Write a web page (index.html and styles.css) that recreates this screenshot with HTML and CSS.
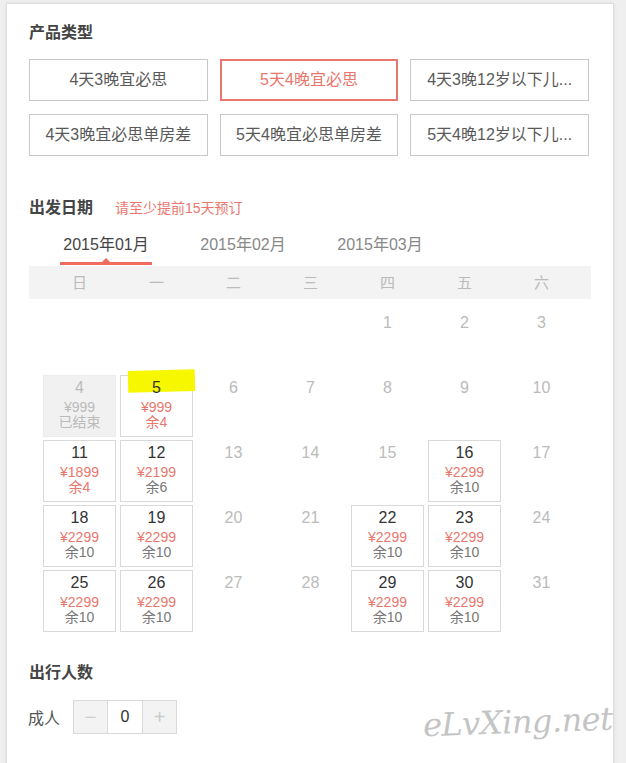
FILE: index.html
```html
<!DOCTYPE html>
<html lang="zh-CN">
<head>
<meta charset="utf-8">
<title>产品预订</title>
<link rel="stylesheet" href="styles.css">
</head>
<body>
<div class="card">
  <div class="sec-title">产品类型</div>
  <div class="products">
    <div class="prod">4天3晚宜必思</div>
    <div class="prod selected">5天4晚宜必思</div>
    <div class="prod">4天3晚12岁以下儿...</div>
    <div class="prod">4天3晚宜必思单房差</div>
    <div class="prod">5天4晚宜必思单房差</div>
    <div class="prod">5天4晚12岁以下儿...</div>
  </div>

  <div class="date-head">
    <span class="sec-title">出发日期</span>
    <span class="note">请至少提前15天预订</span>
  </div>
  <div class="tabs">
    <div class="tab active">2015年01月</div>
    <div class="tab">2015年02月</div>
    <div class="tab">2015年03月</div>
  </div>
  <div class="week">
    <span>日</span><span>一</span><span>二</span><span>三</span><span>四</span><span>五</span><span>六</span>
  </div>
  <div class="days">
    <div class="day"></div><div class="day"></div><div class="day"></div><div class="day"></div>
    <div class="day"><div class="num">1</div></div>
    <div class="day"><div class="num">2</div></div>
    <div class="day"><div class="num">3</div></div>

    <div class="day past"><div class="num">4</div><div class="price">¥999</div><div class="rem">已结束</div></div>
    <div class="day on"><span class="mark"></span><div class="num">5</div><div class="price">¥999</div><div class="rem low">余4</div></div>
    <div class="day"><div class="num">6</div></div>
    <div class="day"><div class="num">7</div></div>
    <div class="day"><div class="num">8</div></div>
    <div class="day"><div class="num">9</div></div>
    <div class="day"><div class="num">10</div></div>

    <div class="day on"><div class="num">11</div><div class="price">¥1899</div><div class="rem low">余4</div></div>
    <div class="day on"><div class="num">12</div><div class="price">¥2199</div><div class="rem">余6</div></div>
    <div class="day"><div class="num">13</div></div>
    <div class="day"><div class="num">14</div></div>
    <div class="day"><div class="num">15</div></div>
    <div class="day on"><div class="num">16</div><div class="price">¥2299</div><div class="rem">余10</div></div>
    <div class="day"><div class="num">17</div></div>

    <div class="day on"><div class="num">18</div><div class="price">¥2299</div><div class="rem">余10</div></div>
    <div class="day on"><div class="num">19</div><div class="price">¥2299</div><div class="rem">余10</div></div>
    <div class="day"><div class="num">20</div></div>
    <div class="day"><div class="num">21</div></div>
    <div class="day on"><div class="num">22</div><div class="price">¥2299</div><div class="rem">余10</div></div>
    <div class="day on"><div class="num">23</div><div class="price">¥2299</div><div class="rem">余10</div></div>
    <div class="day"><div class="num">24</div></div>

    <div class="day on"><div class="num">25</div><div class="price">¥2299</div><div class="rem">余10</div></div>
    <div class="day on"><div class="num">26</div><div class="price">¥2299</div><div class="rem">余10</div></div>
    <div class="day"><div class="num">27</div></div>
    <div class="day"><div class="num">28</div></div>
    <div class="day on"><div class="num">29</div><div class="price">¥2299</div><div class="rem">余10</div></div>
    <div class="day on"><div class="num">30</div><div class="price">¥2299</div><div class="rem">余10</div></div>
    <div class="day"><div class="num">31</div></div>
  </div>

  <div class="sec-title pax-title">出行人数</div>
  <div class="pax">
    <span class="pax-label">成人</span>
    <div class="stepper">
      <span class="btn">−</span>
      <span class="val">0</span>
      <span class="btn">+</span>
    </div>
  </div>

  <div class="watermark">eLvXing.net</div>
</div>
</body>
</html>
```
FILE: styles.css
```css
html, body {
  margin: 0;
  padding: 0;
}
body {
  background: #efefef;
  font-family: "Liberation Sans", "Noto Sans CJK SC", sans-serif;
  color: #555;
  overflow: hidden;
}
.card {
  position: relative;
  box-sizing: border-box;
  width: 608px;
  min-height: 820px;
  margin: 3px 0 0 6px;
  padding: 18px 22px 40px;
  background: #fff;
  border: 1px solid #dedede;
  box-shadow: 0 0 4px rgba(0, 0, 0, 0.08);
}
.sec-title {
  font-size: 16px;
  line-height: 22px;
  font-weight: bold;
  color: #444;
}
.products {
  margin-top: 15px;
  width: 560px;
  display: grid;
  grid-template-columns: repeat(3, 1fr);
  gap: 13px 12px;
}
.prod {
  box-sizing: border-box;
  height: 42px;
  line-height: 40px;
  border: 1px solid #c9c9c9;
  text-align: center;
  font-size: 16px;
  color: #5a5a5a;
  white-space: nowrap;
  overflow: hidden;
}
.prod.selected {
  border: 2px solid #e8776d;
  line-height: 38px;
  color: #e8776d;
}
.date-head {
  margin-top: 41px;
  display: flex;
  align-items: baseline;
}
.note {
  margin-left: 22px;
  font-size: 14px;
  color: #e8776d;
}
.tabs {
  margin-top: 15px;
  display: flex;
  gap: 45px;
  padding-left: 31px;
}
.tab {
  position: relative;
  width: 92px;
  text-align: center;
  font-size: 16px;
  line-height: 22px;
  padding-bottom: 6px;
  border-bottom: 3px solid transparent;
  color: #888;
}
.tab.active {
  color: #444;
  border-bottom-color: #ef6b60;
}
.tab.active::after {
  content: "";
  position: absolute;
  left: 50%;
  bottom: 0;
  margin-left: -4px;
  border: 4px solid transparent;
  border-top: 0;
  border-bottom-color: #ef6b60;
}
.week {
  margin-top: 1px;
  height: 33px;
  line-height: 33px;
  background: #f3f3f3;
  display: grid;
  grid-template-columns: repeat(7, 73px);
  column-gap: 4px;
  padding-left: 14px;
  font-size: 15px;
  color: #bbb;
  text-align: center;
}
.days {
  margin-top: 11px;
  display: grid;
  grid-template-columns: repeat(7, 73px);
  grid-auto-rows: 62px;
  gap: 3px 4px;
  padding-left: 14px;
}
.day {
  position: relative;
  box-sizing: border-box;
  border: 1px solid transparent;
  padding-top: 2px;
  text-align: center;
  color: #bbb;
}
.num {
  position: relative;
  z-index: 1;
  font-size: 16px;
  line-height: 20px;
}
.price {
  margin-top: 2px;
  font-size: 14px;
  line-height: 15px;
}
.rem {
  font-size: 14px;
  line-height: 15px;
}
.day.on {
  border-color: #d9d9d9;
}
.day.on .num {
  color: #333;
}
.day.on .price {
  color: #e8776d;
}
.day.on .rem {
  color: #777;
}
.day.on .rem.low {
  color: #e8776d;
}
.day.past {
  background: #f1f1f1;
  border-color: #ececec;
}
.mark {
  position: absolute;
  left: 7px;
  top: -6px;
  width: 67px;
  height: 22px;
  background: #f7f700;
  transform: rotate(-1.5deg);
}
.pax-title {
  margin-top: 30px;
}
.pax {
  margin-top: 16px;
  display: flex;
  align-items: center;
}
.pax-label {
  font-size: 16px;
  color: #555;
  margin-right: 13px;
  margin-left: -1px;
}
.stepper {
  display: flex;
  height: 34px;
  box-sizing: border-box;
  border: 1px solid #dadada;
}
.stepper .btn,
.stepper .val {
  width: 33px;
  display: flex;
  align-items: center;
  justify-content: center;
}
.stepper .btn {
  background: #f3f3f3;
  color: #ccc;
  font-size: 20px;
}
.stepper .val {
  width: 34px;
  background: #fff;
  border-left: 1px solid #dadada;
  border-right: 1px solid #dadada;
  font-size: 16px;
  color: #333;
}
.watermark {
  position: absolute;
  left: 416px;
  top: 700px;
  font-family: "DejaVu Serif", serif;
  font-style: italic;
  font-size: 32px;
  line-height: 36px;
  letter-spacing: -0.5px;
  color: #c4c4c4;
  transform: rotate(-2deg);
}
```
